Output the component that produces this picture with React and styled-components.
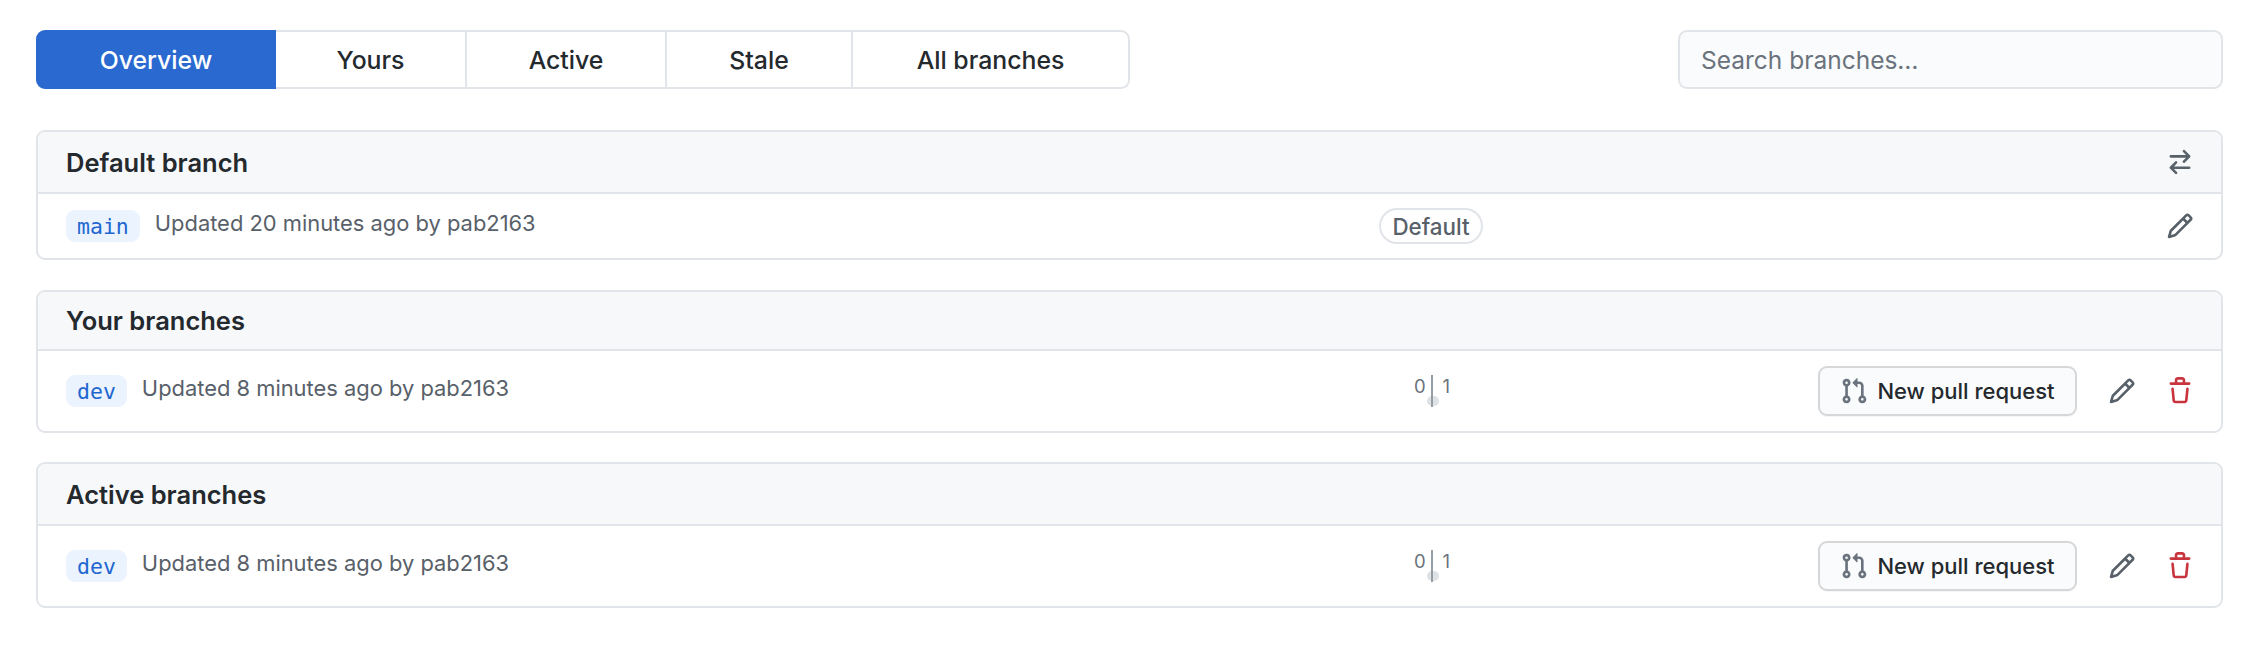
import React from "react";
import styled, { createGlobalStyle } from "styled-components";

const GlobalStyle = createGlobalStyle`
  html, body {
    margin: 0;
    padding: 0;
    background: #fff;
  }
  body {
    font-family: Inter, "Liberation Sans", sans-serif;
    color: #24292e;
  }
`;

const Page = styled.div`
  width: 2250px;
  height: 650px;
  box-sizing: border-box;
  padding: 30px 27px 0 36px;
`;

const Toolbar = styled.div`
  display: flex;
  justify-content: space-between;
  margin-bottom: 41px;
`;

const Tabs = styled.nav`
  display: flex;
  height: 59px;
`;

const Tab = styled.a`
  box-sizing: border-box;
  width: ${p => p.$width}px;
  display: flex;
  align-items: center;
  justify-content: center;
  font-size: 24.8px;
  font-weight: 500;
  color: ${p => (p.$selected ? "#fff" : "#24292e")};
  background: ${p => (p.$selected ? "#2969d0" : "#fff")};
  border: 2px solid ${p => (p.$selected ? "#2969d0" : "#e1e4e8")};
  border-left-width: ${p => (p.$selected ? 2 : 0)}px;
  &:first-child {
    border-radius: 9px 0 0 9px;
  }
  &:last-child {
    border-radius: 0 9px 9px 0;
  }
`;

const Search = styled.div`
  box-sizing: border-box;
  width: 545px;
  height: 59px;
  padding: 0 21px;
  display: flex;
  align-items: center;
  font-size: 24.5px;
  color: #6a737d;
  background: #fafbfc;
  border: 2px solid #e1e4e8;
  border-radius: 9px;
`;

const Box = styled.section`
  border: 2px solid #e1e4e8;
  border-radius: 9px;
  overflow: hidden;
  margin-bottom: ${p => p.$gap || 29}px;
`;

const BoxHeader = styled.div`
  box-sizing: border-box;
  height: ${p => p.$height}px;
  padding: 0 27px 0 28px;
  display: flex;
  align-items: center;
  justify-content: space-between;
  background: #f6f8fa;
  border-bottom: 2px solid #e1e4e8;
`;

const BoxTitle = styled.h3`
  margin: 0;
  font-size: 25.5px;
  font-weight: 600;
  color: #24292e;
`;

const Row = styled.div`
  box-sizing: border-box;
  height: ${p => p.$height}px;
  padding: 0 27px 0 28px;
  display: grid;
  grid-template-columns: 1fr 150px 688px;
  align-items: center;
`;

const BranchInfo = styled.div`
  display: flex;
  align-items: flex-start;
  gap: ${p => p.$gap}px;
`;

const BranchName = styled.a`
  box-sizing: border-box;
  height: 32px;
  padding: 0 11px;
  display: block;
  font-family: "DejaVu Sans Mono", "Liberation Mono", monospace;
  font-size: 21.5px;
  line-height: 33px;
  color: #1f66d0;
  background: #eaf3fe;
  border-radius: 9px;
`;

const Updated = styled.span`
  font-size: 21.9px;
  line-height: 26px;
  color: #586069;
`;

const Compare = styled.div`
  display: flex;
  justify-content: center;
`;

const DefaultLabel = styled.span`
  box-sizing: border-box;
  height: 36px;
  padding: 0 11px;
  display: flex;
  align-items: center;
  font-size: 22.4px;
  font-weight: 500;
  color: #586069;
  border: 2px solid #e1e4e8;
  border-radius: 18px;
`;

const AheadBehind = styled.div`
  position: relative;
  width: 48px;
  height: 32px;
  padding: 1px 0 0 2px;
  display: flex;
  justify-content: center;
  gap: 17px;
  font-size: 18.5px;
  line-height: 20px;
  color: #6a737d;
`;

const Divider = styled.i`
  position: absolute;
  left: 25px;
  top: 0;
  width: 2px;
  height: 32px;
  background: #959da5;
`;

const Dot = styled.i`
  position: absolute;
  left: 21px;
  top: 21px;
  width: 12px;
  height: 10px;
  background: #dfe2e5;
  border-radius: 5px;
`;

const Actions = styled.div`
  display: flex;
  align-items: center;
  justify-content: flex-end;
`;

const PullButton = styled.a`
  box-sizing: border-box;
  width: 259px;
  height: 50px;
  margin-right: 31px;
  display: flex;
  align-items: center;
  justify-content: center;
  gap: 9px;
  font-size: 22px;
  font-weight: 500;
  color: #24292e;
  background: #fafbfc;
  border: 2px solid #d5d7d9;
  border-radius: 9px;
  box-shadow: 0 1px 0 rgba(27, 31, 35, 0.04);
`;

const IconSlot = styled.span`
  display: flex;
  color: ${p => p.$color || "#586069"};
  margin-right: ${p => p.$gap || 0}px;
`;

const Octicon = ({ size = 28, d }) => (
  <svg width={size} height={size} viewBox="0 0 16 16" fill="currentColor">
    <path fillRule="evenodd" d={d} />
  </svg>
);

const SWITCH =
  "M5.22 14.78a.75.75 0 001.06-1.06L4.56 12h8.69a.75.75 0 000-1.5H4.56l1.72-1.72a.75.75 0 00-1.06-1.06l-3 3a.75.75 0 000 1.06l3 3zm5.56-6.5a.75.75 0 11-1.06-1.06l1.72-1.72H2.75a.75.75 0 010-1.5h8.69L9.72 2.28a.75.75 0 011.06-1.06l3 3a.75.75 0 010 1.06l-3 3z";
const PENCIL =
  "M11.013 1.427a1.75 1.75 0 012.474 0l1.086 1.086a1.75 1.75 0 010 2.474l-8.61 8.61c-.21.21-.47.364-.756.445l-3.251.93a.75.75 0 01-.927-.928l.929-3.25a1.75 1.75 0 01.445-.758l8.61-8.61zm1.414 1.06a.25.25 0 00-.354 0L10.811 3.75l1.439 1.44 1.263-1.263a.25.25 0 000-.354l-1.086-1.086zM11.189 6.25L9.75 4.81l-6.286 6.287a.25.25 0 00-.064.108l-.558 1.953 1.953-.558a.249.249 0 00.108-.064l6.286-6.286z";
const TRASH =
  "M6.5 1.75a.25.25 0 01.25-.25h2.5a.25.25 0 01.25.25V3h-3V1.75zm4.5 0V3h2.25a.75.75 0 010 1.5H2.75a.75.75 0 010-1.5H5V1.75C5 .784 5.784 0 6.75 0h2.5C10.216 0 11 .784 11 1.75zM4.496 6.675a.75.75 0 10-1.492.15l.66 6.6A1.75 1.75 0 005.405 15h5.19c.9 0 1.652-.681 1.741-1.576l.66-6.6a.75.75 0 00-1.492-.149l-.66 6.6a.25.25 0 01-.249.225h-5.19a.25.25 0 01-.249-.225l-.66-6.6z";
const PULL =
  "M7.177 3.073L9.573.677A.25.25 0 0110 .854v4.792a.25.25 0 01-.427.177L7.177 3.427a.25.25 0 010-.354zM3.75 2.5a.75.75 0 100 1.5.75.75 0 000-1.5zm-2.25.75a2.25 2.25 0 113 2.122v5.256a2.251 2.251 0 11-1.5 0V5.372A2.25 2.25 0 011.5 3.25zM11 2.5h-1V4h1a1 1 0 011 1v5.628a2.251 2.251 0 101.5 0V5A2.5 2.5 0 0011 2.5zm1 10.25a.75.75 0 111.5 0 .75.75 0 01-1.5 0zM3.75 12a.75.75 0 100 1.5.75.75 0 000-1.5z";

const BranchActions = () => (
  <Actions>
    <PullButton>
      <IconSlot $color="#6a737d">
        <Octicon d={PULL} />
      </IconSlot>
      New pull request
    </PullButton>
    <IconSlot $gap={30}>
      <Octicon d={PENCIL} />
    </IconSlot>
    <IconSlot $color="#c9353f">
      <Octicon d={TRASH} />
    </IconSlot>
  </Actions>
);

const BranchCompare = () => (
  <Compare>
    <AheadBehind>
      <span>0</span>
      <span>1</span>
      <Dot />
      <Divider />
    </AheadBehind>
  </Compare>
);

const tabs = [
  { label: "Overview", width: 240, selected: true },
  { label: "Yours", width: 191 },
  { label: "Active", width: 200 },
  { label: "Stale", width: 186 },
  { label: "All branches", width: 277 }
];

const App = () => (
  <Page>
    <GlobalStyle />
    <Toolbar>
      <Tabs>
        {tabs.map(t => (
          <Tab key={t.label} $width={t.width} $selected={t.selected}>
            {t.label}
          </Tab>
        ))}
      </Tabs>
      <Search>Search branches…</Search>
    </Toolbar>

    <Box $gap={30}>
      <BoxHeader $height={62}>
        <BoxTitle>Default branch</BoxTitle>
        <IconSlot>
          <Octicon d={SWITCH} />
        </IconSlot>
      </BoxHeader>
      <Row $height={64}>
        <BranchInfo $gap={15}>
          <BranchName>main</BranchName>
          <Updated>Updated 20 minutes ago by pab2163</Updated>
        </BranchInfo>
        <Compare>
          <DefaultLabel>Default</DefaultLabel>
        </Compare>
        <Actions>
          <IconSlot>
            <Octicon d={PENCIL} />
          </IconSlot>
        </Actions>
      </Row>
    </Box>

    <Box>
      <BoxHeader $height={59}>
        <BoxTitle>Your branches</BoxTitle>
      </BoxHeader>
      <Row $height={80}>
        <BranchInfo $gap={15}>
          <BranchName>dev</BranchName>
          <Updated>Updated 8 minutes ago by pab2163</Updated>
        </BranchInfo>
        <BranchCompare />
        <BranchActions />
      </Row>
    </Box>

    <Box>
      <BoxHeader $height={62}>
        <BoxTitle>Active branches</BoxTitle>
      </BoxHeader>
      <Row $height={80}>
        <BranchInfo $gap={15}>
          <BranchName>dev</BranchName>
          <Updated>Updated 8 minutes ago by pab2163</Updated>
        </BranchInfo>
        <BranchCompare />
        <BranchActions />
      </Row>
    </Box>
  </Page>
);

export default App;
